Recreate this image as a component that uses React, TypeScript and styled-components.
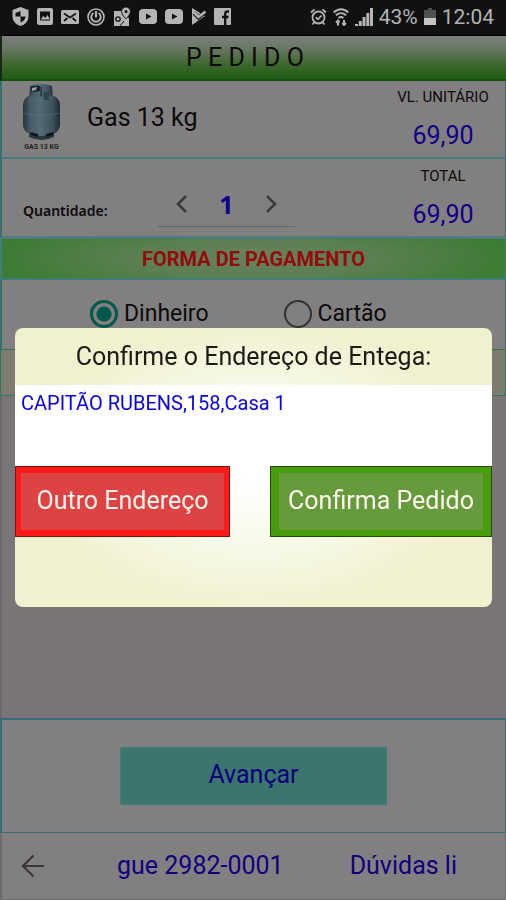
import React, { useState } from "react";
import styled, { createGlobalStyle } from "styled-components";

const GlobalStyle = createGlobalStyle`
  * { box-sizing: border-box; }
  body { margin: 0; background: #7b7778; }
  body, button, input { font-family: Roboto, "Noto Sans", sans-serif; }
`;

const Screen = styled.div`
  min-height: 100vh;
  display: flex;
  flex-direction: column;
  color: #0b0b0b;
`;

const StatusBar = styled.header`
  height: 36px;
  padding: 0 12px 2px;
  display: flex;
  align-items: center;
  justify-content: space-between;
  background: #111111;
  border-bottom: 1px solid #000;
  color: #b4b4b4;
  font-size: 21px;
  line-height: 32px;
`;

const StatusGroup = styled.div<{ $gap: number }>`
  display: flex;
  align-items: center;
  gap: ${(p) => p.$gap}px;
  svg { display: block; }
`;

const TitleBar = styled.h1`
  margin: 0;
  height: 45px;
  display: flex;
  align-items: center;
  justify-content: center;
  padding-right: 18px;
  font-size: 25px;
  font-weight: 400;
  border-left: 2px solid #1c241c;
  border-bottom: 2px solid #10500c;
  background: linear-gradient(#7c807c, #6a7766 28%, #40682f 65%, #1d5d11);
`;

const Row = styled.section<{ $columns: string; $height: number; $line: string }>`
  min-height: ${(p) => p.$height}px;
  display: grid;
  grid-template-columns: ${(p) => p.$columns};
  align-items: center;
  background: #827f80;
  border: solid #376f6d;
  border-width: 0 1px 2px 2px;
  border-bottom-color: ${(p) => p.$line};
`;

const ProductPicture = styled.svg`
  display: block;
  justify-self: center;
  margin: 0 2px 4px 0;
`;

const ProductName = styled.h2`
  margin: 0;
  padding: 0 0 2px 5px;
  font-size: 25px;
  line-height: 32px;
  font-weight: 400;
`;

const PriceBlock = styled.div`
  display: flex;
  flex-direction: column;
  align-items: center;
  gap: 14px;
`;

const PriceLabel = styled.span`
  font-size: 15px;
  line-height: 20px;
`;

const PriceValue = styled.span`
  font-size: 25px;
  line-height: 30px;
  color: #10008a;
`;

const QuantityLabel = styled.label`
  padding: 26px 0 0 21px;
  font-family: "Noto Sans", sans-serif;
  font-size: 14px;
  font-weight: 600;
  line-height: 20px;
`;

const Stepper = styled.div`
  justify-self: start;
  display: flex;
  align-items: center;
  height: 44px;
  margin-top: 14px;
  border-bottom: 1px solid #686566;
`;

const StepButton = styled.button`
  width: 48px;
  height: 40px;
  padding: 0;
  display: grid;
  place-items: center;
  border: 0;
  background: none;
  color: #3b393a;
`;

const QuantityInput = styled.input`
  width: 41px;
  padding: 0;
  border: 0;
  background: none;
  text-align: center;
  font-family: "Noto Sans", sans-serif;
  font-size: 25px;
  font-weight: 700;
  color: #08008c;
`;

const PaymentTitle = styled.h2`
  margin: 0;
  height: 42px;
  display: flex;
  align-items: center;
  justify-content: center;
  font-size: 20px;
  font-weight: 700;
  color: #930b0b;
  border: solid #3f7d76;
  border-width: 1px 1px 2px 2px;
  background: radial-gradient(ellipse 50% 110% at 50% 50%, #688061, #5a7f50 50%, #3d7c34);
`;

const PaymentOptions = styled.fieldset`
  margin: 0;
  height: 69px;
  padding: 20px 0 0 88px;
  display: flex;
  align-items: center;
  gap: 75px;
  background: #827f80;
  border: solid #376f6d;
  border-width: 0 1px 0 2px;
`;

const Option = styled.label`
  display: flex;
  align-items: center;
  gap: 6px;
  font-size: 23px;
  line-height: 28px;
`;

const Radio = styled.input`
  appearance: none;
  width: 28px;
  height: 28px;
  margin: 0;
  border: 2px solid #333;
  border-radius: 50%;
  &:checked {
    border: 3px solid #02584b;
    background: radial-gradient(circle, #02584b 7px, transparent 8px);
  }
`;

const NoteStrip = styled.div`
  height: 47px;
  background: #7f7b70;
  border: 1px solid #2c7a55;
`;

const Spacer = styled.div`
  flex: 1;
  background: #7a7677;
  border-left: 2px solid #6d696a;
`;

const ActionArea = styled.section`
  height: 115px;
  display: grid;
  place-items: center;
  background: #827f80;
  border: solid #3b6b78;
  border-width: 2px 1px 1px 2px;
`;

const AdvanceButton = styled.button`
  width: 53%;
  height: 58px;
  padding: 0 0 4px;
  border: 1px solid #3c8076;
  background: #3c756d;
  color: #08007c;
  font-size: 25px;
`;

const BottomBar = styled.nav`
  height: 67px;
  display: flex;
  align-items: center;
  background: #827f80;
  border: solid #6d6a6b;
  border-width: 0 1px 1px 2px;
`;

const BackButton = styled.button`
  width: 62px;
  height: 48px;
  padding: 0;
  display: grid;
  place-items: center;
  border: 0;
  background: none;
  color: #393738;
`;

const BottomLinks = styled.div`
  flex: 1;
  padding: 0 48px 0 53px;
  display: flex;
  justify-content: space-between;
`;

const BottomLink = styled.a`
  font-size: 25px;
  line-height: 32px;
  color: #12007f;
  text-decoration: none;
  white-space: nowrap;
`;

const Overlay = styled.div`
  position: fixed;
  inset: 0;
  padding: 34px 14px 0 15px;
  display: flex;
  align-items: center;
`;

const Dialog = styled.div`
  width: 100%;
  overflow: hidden;
  border-radius: 8px;
  background: radial-gradient(ellipse 46% 52% at 50% 50%, #ffffff 8%, #f8f9e8 55%, #f0f1cf);
`;

const DialogTitle = styled.h2`
  margin: 0;
  padding: 13px 0 12px;
  text-align: center;
  font-size: 25px;
  line-height: 32px;
  font-weight: 400;
  color: #1c1c16;
`;

const Address = styled.p`
  margin: 0;
  min-height: 81px;
  padding: 5px 6px;
  background: #fff;
  color: #0a00e6;
  font-size: 20px;
  line-height: 26px;
`;

const DialogActions = styled.div`
  display: flex;
  justify-content: space-between;
  padding-bottom: 70px;
`;

const DialogButton = styled.button<{ $edge: string; $frame: string; $face: string; $width: number; $inset: number }>`
  width: ${(p) => p.$width}px;
  height: 71px;
  padding: 6px ${(p) => p.$inset}px;
  border: 1px solid ${(p) => p.$edge};
  background-color: ${(p) => p.$frame};
  background-image: linear-gradient(${(p) => p.$face}, ${(p) => p.$face}),
    linear-gradient(${(p) => p.$frame}, ${(p) => p.$frame});
  background-clip: content-box, padding-box;
  color: #fff6f0;
  font-size: 25px;
  line-height: 32px;
  white-space: nowrap;
`;

const ShieldIcon = () => (
  <svg width="17" height="19" viewBox="0 0 17 19" fill="currentColor">
    <path d="M8.500 0 16.500 3v6c0 5-3 8.500-8 10-5-1.500-8-5-8-10V3z" />
    <path d="M8.500 4v5.500H3.500V6zM8.500 9.500h5c-.3 3-2 5-5 6z" fill="#111" />
  </svg>
);

const ImageIcon = () => (
  <svg width="16" height="17" viewBox="0 0 16 17">
    <rect width="16" height="17" rx="2" fill="currentColor" />
    <path d="M3 3.500h10v9H3z" fill="#111" />
    <path d="M3.500 11.500 6.500 8l2 2 2-3 2.500 4.500z" fill="currentColor" />
  </svg>
);

const MailIcon = () => (
  <svg width="18" height="14" viewBox="0 0 18 14">
    <rect width="18" height="14" rx="1.500" fill="currentColor" />
    <path d="m3 3.500 6 4 6-4M3 11l3.500-3M15 11l-3.500-3" fill="none" stroke="#111" strokeWidth="1.700" />
  </svg>
);

const PowerIcon = () => (
  <svg width="18" height="18" viewBox="0 0 18 18" fill="none" stroke="currentColor">
    <circle cx="9" cy="9" r="8" strokeWidth="1.600" />
    <path d="M6.500 5a4.700 4.700 0 1 0 5 0" strokeWidth="2" />
    <path d="M9 3v6.500" strokeWidth="2.200" />
  </svg>
);

const MapsIcon = () => (
  <svg width="18" height="19" viewBox="0 0 18 19">
    <path d="M1 4h9l1 5 5 2v8H1z" fill="currentColor" />
    <path d="M7 19l4-5" stroke="#111" strokeWidth="1" />
    <circle cx="5" cy="12" r="2.200" fill="none" stroke="#111" strokeWidth="1.300" />
    <path d="M13 0a4.500 4.500 0 0 1 4.500 4.500C17.500 7.500 13 12 13 12S8.500 7.500 8.500 4.500A4.500 4.500 0 0 1 13 0z" fill="currentColor" stroke="#111" />
    <circle cx="13" cy="4.500" r="1.500" fill="#111" />
  </svg>
);

const VideoIcon = () => (
  <svg width="18" height="15" viewBox="0 0 18 15">
    <rect width="18" height="15" rx="4" fill="currentColor" />
    <path d="m7 4.500 5.500 3-5.500 3z" fill="#111" />
  </svg>
);

const PlayCheckIcon = () => (
  <svg width="15" height="17" viewBox="0 0 15 17">
    <path d="M1 0 14 8 1 17z" fill="currentColor" />
    <path d="m3 5 4.500 4.500L15 3" fill="none" stroke="#111" strokeWidth="4" />
    <path d="m3 4.500 4.500 4.500L14.500 3.500" fill="none" stroke="currentColor" strokeWidth="2.600" />
  </svg>
);

const SocialIcon = () => (
  <svg width="17" height="17" viewBox="0 0 17 17">
    <rect width="17" height="17" rx="1" fill="currentColor" />
    <path d="M15 3.500h-1.500c-1.700 0-2.300.8-2.300 2.300V17M8 9h6.500" fill="none" stroke="#111" strokeWidth="2.300" />
  </svg>
);

const AlarmIcon = () => (
  <svg width="17" height="18" viewBox="0 0 17 18" fill="none" stroke="currentColor" strokeWidth="1.800">
    <circle cx="8.500" cy="9.500" r="6" />
    <path d="m5.800 9.300 2.200 2 3.500-3.800M1 4.500 4.500 1.300M16 4.500l-3.500-3.200M4.500 14l-2 2.500M12.500 14l2 2.500" />
  </svg>
);

const WifiIcon = () => (
  <svg width="16" height="18" viewBox="0 0 16 18" fill="none" stroke="currentColor" strokeWidth="2">
    <path d="M.8 4.500C5 .2 11 .2 15.200 4.500M3 7.300c3-2.800 7-2.800 10 0M5.500 10c1.500-1.300 3.500-1.300 5 0" />
    <path d="M5 17.500v-5M3 14.700 5 12.500l1.500 2M11 12v5M9.300 15l1.700 2 2-2" />
  </svg>
);

const SignalIcon = () => (
  <svg width="18" height="18" viewBox="0 0 18 18" fill="currentColor">
    <path d="M0 16h3v2H0zM3.800 13h3v5h-3zM7.500 9h3v9h-3zM11.300 5h3v13h-3zM15 0h3v18h-3z" />
  </svg>
);

const BatteryIcon = () => (
  <svg width="12" height="17" viewBox="0 0 12 17">
    <path d="M4 0h4v2h4v8H0V2h4z" fill="#505050" />
    <path d="M0 10h12v7H0z" fill="#c4c4c4" />
  </svg>
);

const Cylinder = () => (
  <ProductPicture width="40" height="68" viewBox="0 0 40 68" role="img" aria-label="Gas 13 kg">
    <defs>
      <linearGradient id="steel" x1="0" x2="1" y1="0" y2="0">
        <stop offset="0" stopColor="#26343b" />
        <stop offset="0.200" stopColor="#465c66" />
        <stop offset="0.450" stopColor="#536b76" />
        <stop offset="0.800" stopColor="#3d525d" />
        <stop offset="1" stopColor="#1e2a31" />
      </linearGradient>
    </defs>
    <path d="M8 50h25v4q-12.500 6-25 0z" fill="#273841" />
    <path d="M9 3q11-4 22 0l1 14H8z" fill="url(#steel)" />
    <path d="M10 4q4-2 9-1v5l-6 1-3-2z" fill="#17222a" />
    <path d="m11 5 5-1-1 3-4 1z" fill="#9aa1a3" />
    <path d="M20 4v10q6 2 11-1" fill="none" stroke="#24343e" strokeWidth="1.500" />
    <path d="M10 12q10 3 21 0c7 3 8 6 8 12v17c0 8-5 11-18.500 12C7 52 2 49 2 41V24c0-7 2-10 8-12z" fill="url(#steel)" />
    <path d="M10 16q10 3 21-1M2 30q18 5 37 0" fill="none" stroke="#61747c" strokeWidth="1" opacity="0.500" />
    <path d="M22 9h6v8h-5z" fill="#30444f" />
    <path d="m9 49 8 2v3l-7-2zM25 51l8-2-1 3-7 2z" fill="#0c151b" />
    <text x="20.500" y="66" textAnchor="middle" fontFamily="Roboto, sans-serif" fontSize="7" fontWeight="700" fill="#222">GAS 13 KG</text>
  </ProductPicture>
);

const Chevron = ({ points }: { points: string }) => (
  <svg width="16" height="20" viewBox="0 0 16 20" fill="none" stroke="currentColor" strokeWidth="2.500">
    <polyline points={points} />
  </svg>
);

export default function App() {
  const [quantity, setQuantity] = useState(1);
  const [payment, setPayment] = useState("Dinheiro");
  const total = (quantity * 69.9).toFixed(2).replace(".", ",");

  return (
    <>
      <GlobalStyle />
      <Screen>
        <StatusBar>
          <StatusGroup $gap={8}>
            <ShieldIcon />
            <ImageIcon />
            <MailIcon />
            <PowerIcon />
            <MapsIcon />
            <VideoIcon />
            <VideoIcon />
            <PlayCheckIcon />
            <SocialIcon />
          </StatusGroup>
          <StatusGroup $gap={6}>
            <AlarmIcon />
            <WifiIcon />
            <SignalIcon />
            <span>43%</span>
            <BatteryIcon />
            <span>12:04</span>
          </StatusGroup>
        </StatusBar>
        <TitleBar>P E D I D O</TitleBar>
        <Row $columns="80px 1fr 124px" $height={78} $line="#467b7b">
          <Cylinder />
          <ProductName>Gas 13 kg</ProductName>
          <PriceBlock>
            <PriceLabel>VL. UNITÁRIO</PriceLabel>
            <PriceValue>69,90</PriceValue>
          </PriceBlock>
        </Row>
        <Row $columns="156px 1fr 124px" $height={79} $line="#547b80">
          <QuantityLabel htmlFor="quantity">Quantidade:</QuantityLabel>
          <Stepper>
            <StepButton aria-label="Diminuir" onClick={() => setQuantity(Math.max(1, quantity - 1))}>
              <Chevron points="12,2 4,10 12,18" />
            </StepButton>
            <QuantityInput
              id="quantity"
              value={quantity}
              onChange={(e) => setQuantity(Number(e.target.value) || 1)}
            />
            <StepButton aria-label="Aumentar" onClick={() => setQuantity(quantity + 1)}>
              <Chevron points="4,2 12,10 4,18" />
            </StepButton>
          </Stepper>
          <PriceBlock>
            <PriceLabel>TOTAL</PriceLabel>
            <PriceValue>{total}</PriceValue>
          </PriceBlock>
        </Row>
        <PaymentTitle>FORMA DE PAGAMENTO</PaymentTitle>
        <PaymentOptions aria-label="Forma de pagamento">
          {["Dinheiro", "Cartão"].map((name) => (
            <Option key={name}>
              <Radio type="radio" name="payment" checked={payment === name} onChange={() => setPayment(name)} />
              {name}
            </Option>
          ))}
        </PaymentOptions>
        <NoteStrip />
        <Spacer />
        <ActionArea>
          <AdvanceButton>Avançar</AdvanceButton>
        </ActionArea>
        <BottomBar>
          <BackButton aria-label="Voltar">
            <svg width="24" height="24" viewBox="0 0 24 24" fill="none" stroke="currentColor" strokeWidth="2.200">
              <path d="M12.500 1.500 2 12l10.500 10.500M2 12h21" />
            </svg>
          </BackButton>
          <BottomLinks>
            <BottomLink href="#ligue">gue 2982-0001</BottomLink>
            <BottomLink href="#duvidas">Dúvidas li</BottomLink>
          </BottomLinks>
        </BottomBar>
      </Screen>
      <Overlay>
        <Dialog role="dialog" aria-modal="true" aria-labelledby="confirm-title">
          <DialogTitle id="confirm-title">Confirme o Endereço de Entega:</DialogTitle>
          <Address>CAPITÃO RUBENS,158,Casa 1</Address>
          <DialogActions>
            <DialogButton $edge="#7c1512" $frame="#fd1b19" $face="#dd4343" $width={215} $inset={5}>
              Outro Endereço
            </DialogButton>
            <DialogButton $edge="#1d4f0c" $frame="#489b0c" $face="#659b3b" $width={222} $inset={8}>
              Confirma Pedido
            </DialogButton>
          </DialogActions>
        </Dialog>
      </Overlay>
    </>
  );
}
